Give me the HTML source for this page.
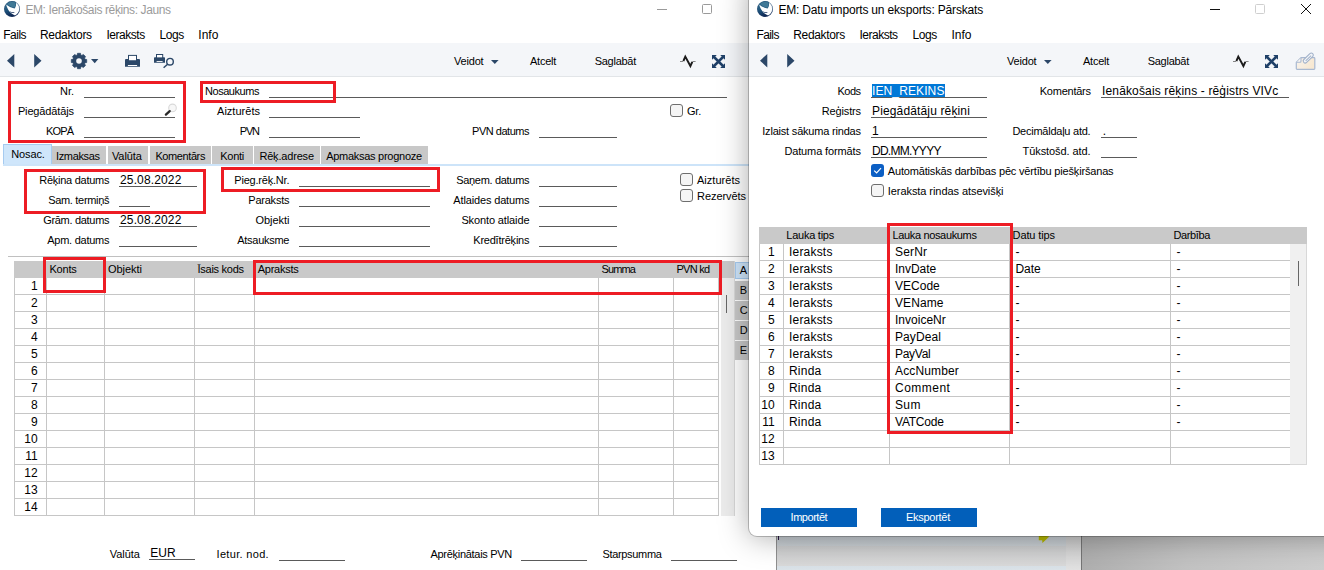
<!DOCTYPE html>
<html lang="lv"><head><meta charset="utf-8"><title>EM: Ienākošais rēķins</title>
<style>
html,body{margin:0;padding:0;background:#fff}
#root{position:relative;width:1324px;height:570px;overflow:hidden;background:#fff;font-family:"Liberation Sans",sans-serif}
#root div{position:absolute}
.t{position:absolute;white-space:nowrap;line-height:20px;height:20px;z-index:3}
svg{position:absolute;overflow:visible;z-index:3}
</style></head><body>
<div id="root">
<div style="left:776px;top:530px;width:1px;height:40px;background:#8f8f8f;"></div>
<div style="left:777px;top:530px;width:289px;height:40px;background:linear-gradient(#c3c9ce 0,#c3c9ce 6px,#c9cfd3 16px,#cbcccd 16px,#d9d9d9 36px,#d8e0e6 36px,#dbe3e8 40px);"></div>
<div style="left:1066px;top:530px;width:15px;height:40px;background:linear-gradient(#c6c6c6 0,#c9c9c9 6px,#e2e2e2 40px);"></div>
<div style="left:1081px;top:530px;width:1px;height:40px;background:#757575;"></div>
<div style="left:1082px;top:530px;width:242px;height:40px;background:linear-gradient(105deg,#adadad 0,#c2c2c2 45%,#cecece 100%);"></div>
<div style="left:778px;top:536px;width:1px;height:4px;background:#2a1440;"></div>
<svg style="left:1038px;top:535px" width="13" height="9" viewBox="0 0 13 9"><path d="M0.8 0 L11.4 1.6 L4.4 8 L4.2 5.2 L0.8 5.2 Z" fill="#b4b700"/></svg>
<svg style="left:4px;top:0.8px" width="16" height="16" viewBox="0 0 16 16"><defs><linearGradient id="lg" x1="0.2" y1="0" x2="0.6" y2="1"><stop offset="0" stop-color="#3b7694"/><stop offset="0.55" stop-color="#1c4f78"/><stop offset="1" stop-color="#0a1c4a"/></linearGradient></defs><circle cx="8" cy="8" r="7.9" fill="url(#lg)"/><path d="M2.2 3.6 C3.2 8.2 6 12.4 11 14.6 C13.8 13.2 15.6 10.4 15.5 7.2 C15.3 4.6 13.9 2.3 11.9 1.2 C12.4 3.8 11.8 6 10.6 7.4 C7.4 6.9 4.3 5.6 2.2 3.6 Z" fill="#fdfeff"/><path d="M3.2 2.8 C5.4 0.5 8.8 0 11.3 1 C11.8 3.2 11.3 5.4 10.5 6.8 C7.7 6.3 5 4.9 3.2 2.8 Z" fill="#3f7896"/><path d="M5.8 10.2 C7.3 11.1 9.2 11.3 10.8 10.9 C9.6 12.2 7 12.2 5.8 10.2 Z" fill="#15305e"/><circle cx="8" cy="8" r="7.6" fill="none" stroke="#1d3d68" stroke-width="0.5" opacity="0.7"/></svg>
<div style="left:657px;top:9px;width:10px;height:1px;background:#9a9a9a;"></div>
<div style="left:702px;top:4px;width:8px;height:8px;border:1px solid #9a9a9a;border-radius:1.5px;"></div>
<div style="left:0px;top:43px;width:749px;height:33px;background:#f4f6f9;"></div>
<div style="left:0px;top:76px;width:749px;height:1px;background:#e2e5e8;"></div>
<svg style="left:6.8px;top:53.7px" width="36" height="14"><path d="M7.3 0 L7.3 13.4 L0 6.7 Z M27.2 0 L27.2 13.4 L34.5 6.7 Z" fill="#2b4768"/></svg>
<svg style="left:71px;top:52.9px" width="16" height="16" viewBox="0 0 16 16"><g transform="translate(8,8)" fill="#2b4768"><path d="M-1.5 -7.7 H1.5 L2.2 -5 H-2.2 Z M-1.5 7.7 H1.5 L2.2 5 H-2.2 Z" stroke="#2b4768" stroke-width="0.7" stroke-linejoin="round" transform="rotate(0)"/><path d="M-1.5 -7.7 H1.5 L2.2 -5 H-2.2 Z M-1.5 7.7 H1.5 L2.2 5 H-2.2 Z" stroke="#2b4768" stroke-width="0.7" stroke-linejoin="round" transform="rotate(45)"/><path d="M-1.5 -7.7 H1.5 L2.2 -5 H-2.2 Z M-1.5 7.7 H1.5 L2.2 5 H-2.2 Z" stroke="#2b4768" stroke-width="0.7" stroke-linejoin="round" transform="rotate(90)"/><path d="M-1.5 -7.7 H1.5 L2.2 -5 H-2.2 Z M-1.5 7.7 H1.5 L2.2 5 H-2.2 Z" stroke="#2b4768" stroke-width="0.7" stroke-linejoin="round" transform="rotate(135)"/><circle r="5.7"/><circle r="2.8" fill="#f4f6f9"/></g></svg>
<svg style="left:91px;top:59.2px" width="8" height="5"><path d="M0 0 L7.4 0 L3.7 4.2 Z" fill="#2b4768"/></svg>
<svg style="left:125px;top:54px" width="15" height="14" viewBox="0 0 15 14"><path d="M0 6 Q0 5 1 5 H14 Q15 5 15 6 V12.8 H0 Z" fill="#2b4768"/><rect x="3.5" y="1.4" width="8" height="5.4" fill="#fdfdfe" stroke="#2b4768" stroke-width="1"/><rect x="2.9" y="11" width="9.2" height="1" fill="#fdfdfe"/></svg>
<svg style="left:154px;top:53px" width="21" height="16" viewBox="0 0 21 16"><path d="M0 5 Q0 4.2 0.8 4.2 H10.2 Q11 4.2 11 5 V9.8 H0 Z" fill="#2b4768"/><rect x="2.5" y="1.5" width="6.2" height="3.4" fill="#fdfdfe" stroke="#2b4768" stroke-width="1"/><rect x="2.6" y="8" width="6" height="0.9" fill="#fdfdfe"/><circle cx="16" cy="8.7" r="3.3" fill="none" stroke="#2b4768" stroke-width="1.4"/><path d="M13.6 11.2 L9.6 14.8" stroke="#2b4768" stroke-width="1.5"/></svg>
<svg style="left:491px;top:59.5px" width="8" height="4"><path d="M0 0 L7.6 0 L3.8 4 Z" fill="#2b4768"/></svg>
<svg style="left:680.2px;top:54px" width="16" height="14" viewBox="0 0 16 14"><path d="M0 7.5 H2.9 L5.3 2.6 L10.4 12 L12.7 7.5 H15.6" fill="none" stroke="#555" stroke-width="0.7" stroke-linejoin="miter"/><path d="M3.4 7 L5.3 2.6 L10.4 12 L12.3 7.8" fill="none" stroke="#1c1c1c" stroke-width="1.9" stroke-linejoin="miter"/></svg>
<svg style="left:711.8px;top:54.9px" width="13" height="13" viewBox="0 0 13 13"><path d="M2 2 L11 11 M11 2 L2 11" stroke="#1f4068" stroke-width="2.5"/><path d="M0 0 H4.8 L0 4.8 Z M13 0 H8.2 L13 4.8 Z M0 13 H4.8 L0 8.2 Z M13 13 H8.2 L13 8.2 Z" fill="#1f4068"/></svg>
<div style="left:84px;top:97px;width:91px;height:1px;background:#5a5a5a;"></div>
<div style="left:84px;top:117px;width:91px;height:1px;background:#5a5a5a;"></div>
<div style="left:84px;top:137px;width:91px;height:1px;background:#5a5a5a;"></div>
<div style="left:269px;top:97px;width:458px;height:1px;background:#5a5a5a;"></div>
<div style="left:269px;top:117px;width:91px;height:1px;background:#5a5a5a;"></div>
<div style="left:269px;top:137px;width:91px;height:1px;background:#5a5a5a;"></div>
<div style="left:539px;top:137px;width:78px;height:1px;background:#5a5a5a;"></div>
<svg style="left:164px;top:103px" width="13" height="13" viewBox="0 0 13 13"><circle cx="8.5" cy="4.9" r="3.8" fill="#f7f7f7" stroke="#d9d9d9" stroke-width="1.1"/><path d="M5.7 8.1 L1.9 11.6" stroke="#2a2a2a" stroke-width="2.3" stroke-linecap="round"/></svg>
<div style="left:670px;top:104px;width:11px;height:11px;background:#f5f5f5;border:1px solid #6e6e6e;border-radius:3px"></div>
<div style="left:3px;top:164px;width:746px;height:2px;background:#cde4f9;"></div>
<div style="left:3px;top:144px;width:47px;height:19px;background:#cfe6fb;border:1px solid #a6cbf0;border-bottom:none;"></div>
<div style="left:52px;top:146px;width:54px;height:18px;background:#c8c8c8;"></div>
<div style="left:107.6px;top:146px;width:40.20000000000002px;height:18px;background:#c8c8c8;"></div>
<div style="left:149.5px;top:146px;width:61.400000000000006px;height:18px;background:#c8c8c8;"></div>
<div style="left:212.3px;top:146px;width:40.5px;height:18px;background:#c8c8c8;"></div>
<div style="left:254.2px;top:146px;width:65.80000000000001px;height:18px;background:#c8c8c8;"></div>
<div style="left:321.3px;top:146px;width:106.30000000000001px;height:18px;background:#c8c8c8;"></div>
<div style="left:119px;top:186px;width:78px;height:1px;background:#5a5a5a;"></div>
<div style="left:119px;top:206px;width:31px;height:1px;background:#5a5a5a;"></div>
<div style="left:119px;top:226px;width:78px;height:1px;background:#5a5a5a;"></div>
<div style="left:119px;top:246px;width:78px;height:1px;background:#5a5a5a;"></div>
<div style="left:299px;top:186px;width:131px;height:1px;background:#5a5a5a;"></div>
<div style="left:299px;top:206px;width:131px;height:1px;background:#5a5a5a;"></div>
<div style="left:299px;top:226px;width:131px;height:1px;background:#5a5a5a;"></div>
<div style="left:299px;top:246px;width:131px;height:1px;background:#5a5a5a;"></div>
<div style="left:539px;top:186px;width:78px;height:1px;background:#5a5a5a;"></div>
<div style="left:539px;top:206px;width:78px;height:1px;background:#5a5a5a;"></div>
<div style="left:539px;top:226px;width:78px;height:1px;background:#5a5a5a;"></div>
<div style="left:539px;top:246px;width:78px;height:1px;background:#5a5a5a;"></div>
<div style="left:680px;top:173px;width:11px;height:11px;background:#f5f5f5;border:1px solid #6e6e6e;border-radius:3px"></div>
<div style="left:680px;top:189px;width:11px;height:11px;background:#f5f5f5;border:1px solid #6e6e6e;border-radius:3px"></div>
<div style="left:8px;top:256px;width:741px;height:1px;background:#c0c0c0;"></div>
<div style="left:14px;top:261px;width:721px;height:17px;background:#c9c9c9;"></div>
<div style="left:721px;top:278px;width:14px;height:238px;background:#ececec;"></div>
<div style="left:726px;top:295px;width:1px;height:18px;background:#666;"></div>
<div style="left:14px;top:294px;width:705px;height:1px;background:#c6c6c6;"></div>
<div style="left:14px;top:311px;width:705px;height:1px;background:#c6c6c6;"></div>
<div style="left:14px;top:328px;width:705px;height:1px;background:#c6c6c6;"></div>
<div style="left:14px;top:345px;width:705px;height:1px;background:#c6c6c6;"></div>
<div style="left:14px;top:362px;width:705px;height:1px;background:#c6c6c6;"></div>
<div style="left:14px;top:379px;width:705px;height:1px;background:#c6c6c6;"></div>
<div style="left:14px;top:396px;width:705px;height:1px;background:#c6c6c6;"></div>
<div style="left:14px;top:413px;width:705px;height:1px;background:#c6c6c6;"></div>
<div style="left:14px;top:430px;width:705px;height:1px;background:#c6c6c6;"></div>
<div style="left:14px;top:447px;width:705px;height:1px;background:#c6c6c6;"></div>
<div style="left:14px;top:464px;width:705px;height:1px;background:#c6c6c6;"></div>
<div style="left:14px;top:481px;width:705px;height:1px;background:#c6c6c6;"></div>
<div style="left:14px;top:498px;width:705px;height:1px;background:#c6c6c6;"></div>
<div style="left:14px;top:515px;width:705px;height:1px;background:#c6c6c6;"></div>
<div style="left:14px;top:278px;width:1px;height:238px;background:#c6c6c6;"></div>
<div style="left:46px;top:278px;width:1px;height:238px;background:#c6c6c6;"></div>
<div style="left:104px;top:278px;width:1px;height:238px;background:#c6c6c6;"></div>
<div style="left:194px;top:278px;width:1px;height:238px;background:#c6c6c6;"></div>
<div style="left:254px;top:278px;width:1px;height:238px;background:#c6c6c6;"></div>
<div style="left:598px;top:278px;width:1px;height:238px;background:#c6c6c6;"></div>
<div style="left:673px;top:278px;width:1px;height:238px;background:#c6c6c6;"></div>
<div style="left:718px;top:278px;width:1px;height:238px;background:#c6c6c6;"></div>
<div style="left:734px;top:261px;width:1px;height:255px;background:#d8d8d8;"></div>
<div style="left:735px;top:262px;width:16px;height:15px;background:#cfe6fb;border:1px solid #a6cbf0;"></div>
<div style="left:735px;top:281px;width:18px;height:19px;background:#c8c8c8;"></div>
<div style="left:735px;top:301px;width:18px;height:19px;background:#c8c8c8;"></div>
<div style="left:735px;top:321px;width:18px;height:19px;background:#c8c8c8;"></div>
<div style="left:735px;top:341px;width:18px;height:19px;background:#c8c8c8;"></div>
<div style="left:149px;top:559px;width:46px;height:1px;background:#5a5a5a;"></div>
<div style="left:279px;top:560px;width:66px;height:1px;background:#5a5a5a;"></div>
<div style="left:521px;top:560px;width:66px;height:1px;background:#5a5a5a;"></div>
<div style="left:671px;top:560px;width:66px;height:1px;background:#5a5a5a;"></div>
<div style="left:8px;top:81px;width:172px;height:56px;border:3px solid #ed1c24;z-index:5"></div>
<div style="left:200px;top:80.5px;width:130px;height:16.0px;border:3px solid #ed1c24;z-index:5"></div>
<div style="left:24px;top:169px;width:176px;height:39px;border:3px solid #ed1c24;z-index:5"></div>
<div style="left:221px;top:167px;width:213px;height:19px;border:3px solid #ed1c24;z-index:5"></div>
<div style="left:43px;top:257px;width:57px;height:30px;border:3px solid #ed1c24;z-index:5"></div>
<div style="left:253px;top:260px;width:463px;height:29px;border:3px solid #ed1c24;z-index:5"></div>
<div style="left:749px;top:-20px;width:620px;height:556px;background:#fff;border-radius:0 0 0 8px;box-shadow:0 0 0 1px rgba(0,0,0,0.22),0 1px 30px rgba(0,0,0,0.34);z-index:6"></div>
<div id="rw" style="left:0;top:0;width:1324px;height:570px;z-index:7">
<svg style="left:757px;top:0.8px" width="16" height="16" viewBox="0 0 16 16"><defs><linearGradient id="lg" x1="0.2" y1="0" x2="0.6" y2="1"><stop offset="0" stop-color="#3b7694"/><stop offset="0.55" stop-color="#1c4f78"/><stop offset="1" stop-color="#0a1c4a"/></linearGradient></defs><circle cx="8" cy="8" r="7.9" fill="url(#lg)"/><path d="M2.2 3.6 C3.2 8.2 6 12.4 11 14.6 C13.8 13.2 15.6 10.4 15.5 7.2 C15.3 4.6 13.9 2.3 11.9 1.2 C12.4 3.8 11.8 6 10.6 7.4 C7.4 6.9 4.3 5.6 2.2 3.6 Z" fill="#fdfeff"/><path d="M3.2 2.8 C5.4 0.5 8.8 0 11.3 1 C11.8 3.2 11.3 5.4 10.5 6.8 C7.7 6.3 5 4.9 3.2 2.8 Z" fill="#3f7896"/><path d="M5.8 10.2 C7.3 11.1 9.2 11.3 10.8 10.9 C9.6 12.2 7 12.2 5.8 10.2 Z" fill="#15305e"/><circle cx="8" cy="8" r="7.6" fill="none" stroke="#1d3d68" stroke-width="0.5" opacity="0.7"/></svg>
<div style="left:749px;top:43px;width:600px;height:33px;background:#f4f6f9;"></div>
<div style="left:749px;top:76px;width:600px;height:1px;background:#e2e5e8;"></div>
<svg style="left:760.2px;top:53.7px" width="36" height="14"><path d="M7.3 0 L7.3 13.4 L0 6.7 Z M27.2 0 L27.2 13.4 L34.5 6.7 Z" fill="#2b4768"/></svg>
<div style="left:1210px;top:9px;width:10px;height:1px;background:#111;"></div>
<div style="left:1255px;top:4px;width:8px;height:8px;border:1px solid #cfcfcf;border-radius:1.5px;"></div>
<svg style="left:1301px;top:4px" width="10" height="10"><path d="M0 0 L10 10 M10 0 L0 10" stroke="#111" stroke-width="1"/></svg>
<svg style="left:1295px;top:52px" width="21" height="18" viewBox="0 0 21 18"><defs><linearGradient id="pg" x1="0" y1="0" x2="1" y2="0.3"><stop offset="0" stop-color="#f8f3ec"/><stop offset="1" stop-color="#f7e8d2"/></linearGradient></defs><path d="M1.3 10.3 L6 5.6 H19 Q19.8 5.6 19.8 6.4 V16.6 Q19.8 17.4 19 17.4 H2.1 Q1.3 17.4 1.3 16.6 Z" fill="url(#pg)" stroke="#a9b9d1" stroke-width="1.2" stroke-linejoin="round"/><path d="M1.6 10.2 H5 Q6 10.2 6 9.2 V5.9" fill="#fbf8f4" stroke="#a9b9d1" stroke-width="1.1"/><g transform="translate(13.4,5.9) rotate(-44)"><rect x="-6.4" y="-2" width="12.4" height="4" rx="2" fill="#f4f6f9" stroke="#a2b2ca" stroke-width="1.1"/><path d="M-4 0.2 H3.6" stroke="#a2b2ca" stroke-width="1"/></g></svg>
<div style="left:759px;top:227px;width:548px;height:17px;background:#c9c9c9;"></div>
<div style="left:1290px;top:244px;width:17px;height:221px;background:#f0f0f0;"></div>
<div style="left:1298px;top:261px;width:1px;height:25px;background:#666;"></div>
<div style="left:759px;top:260px;width:531px;height:1px;background:#c6c6c6;"></div>
<div style="left:759px;top:277px;width:531px;height:1px;background:#c6c6c6;"></div>
<div style="left:759px;top:294px;width:531px;height:1px;background:#c6c6c6;"></div>
<div style="left:759px;top:311px;width:531px;height:1px;background:#c6c6c6;"></div>
<div style="left:759px;top:328px;width:531px;height:1px;background:#c6c6c6;"></div>
<div style="left:759px;top:345px;width:531px;height:1px;background:#c6c6c6;"></div>
<div style="left:759px;top:362px;width:531px;height:1px;background:#c6c6c6;"></div>
<div style="left:759px;top:379px;width:531px;height:1px;background:#c6c6c6;"></div>
<div style="left:759px;top:396px;width:531px;height:1px;background:#c6c6c6;"></div>
<div style="left:759px;top:413px;width:531px;height:1px;background:#c6c6c6;"></div>
<div style="left:759px;top:430px;width:531px;height:1px;background:#c6c6c6;"></div>
<div style="left:759px;top:447px;width:531px;height:1px;background:#c6c6c6;"></div>
<div style="left:759px;top:464px;width:531px;height:1px;background:#c6c6c6;"></div>
<div style="left:759px;top:244px;width:1px;height:221px;background:#c6c6c6;"></div>
<div style="left:783px;top:244px;width:1px;height:221px;background:#c6c6c6;"></div>
<div style="left:889px;top:244px;width:1px;height:221px;background:#c6c6c6;"></div>
<div style="left:1009px;top:244px;width:1px;height:221px;background:#c6c6c6;"></div>
<div style="left:1170px;top:244px;width:1px;height:221px;background:#c6c6c6;"></div>
<div style="left:1306px;top:244px;width:1px;height:221px;background:#d8d8d8;"></div>
<div style="left:1290px;top:464px;width:17px;height:1px;background:#d8d8d8;"></div>
<div style="left:761px;top:508px;width:96px;height:19px;background:#025fba;"></div>
<div style="left:881px;top:508px;width:96px;height:19px;background:#025fba;"></div>
<div style="left:871px;top:97px;width:116px;height:1px;background:#5a5a5a;"></div>
<div style="left:871px;top:117px;width:116px;height:1px;background:#5a5a5a;"></div>
<div style="left:871px;top:137px;width:116px;height:1px;background:#5a5a5a;"></div>
<div style="left:871px;top:157px;width:116px;height:1px;background:#5a5a5a;"></div>
<div style="left:1101px;top:97px;width:188px;height:1px;background:#5a5a5a;"></div>
<div style="left:1101px;top:137px;width:36px;height:1px;background:#5a5a5a;"></div>
<div style="left:1101px;top:157px;width:36px;height:1px;background:#5a5a5a;"></div>
<div style="left:871.5px;top:84px;width:73.5px;height:13px;background:#0078d7;"></div>
<div style="left:871px;top:164px;width:13px;height:13px;background:#0c5fc4;border-radius:3px"></div><svg style="left:871px;top:164px;z-index:4" width="13" height="13" viewBox="0 0 13 13"><path d="M3.2 6.6 L5.6 9 L10 4.2" fill="none" stroke="#fff" stroke-width="1.2"/></svg>
<div style="left:871px;top:184px;width:11px;height:11px;background:#f5f5f5;border:1px solid #6e6e6e;border-radius:3px"></div>
<div style="left:887px;top:223px;width:120px;height:205px;border:3px solid #ed1c24;z-index:5"></div>
</div>
<div style="left:0;top:0;width:0;height:0;z-index:8">
<svg style="left:1044px;top:59.5px" width="8" height="4"><path d="M0 0 L7.6 0 L3.8 4 Z" fill="#2b4768"/></svg>
<svg style="left:1233.2px;top:54px" width="16" height="14" viewBox="0 0 16 14"><path d="M0 7.5 H2.9 L5.3 2.6 L10.4 12 L12.7 7.5 H15.6" fill="none" stroke="#555" stroke-width="0.7" stroke-linejoin="miter"/><path d="M3.4 7 L5.3 2.6 L10.4 12 L12.3 7.8" fill="none" stroke="#1c1c1c" stroke-width="1.9" stroke-linejoin="miter"/></svg>
<svg style="left:1264.8px;top:54.9px" width="13" height="13" viewBox="0 0 13 13"><path d="M2 2 L11 11 M11 2 L2 11" stroke="#1f4068" stroke-width="2.5"/><path d="M0 0 H4.8 L0 4.8 Z M13 0 H8.2 L13 4.8 Z M0 13 H4.8 L0 8.2 Z M13 13 H8.2 L13 8.2 Z" fill="#1f4068"/></svg>
</div>
<span class="t" id="t0" style="top:0.0px;font-size:12px;left:25.4px;color:#9b9b9b;letter-spacing:-0.385px;">EM: Ienākošais rēķins: Jauns</span>
<span class="t" id="t1" style="top:25.0px;font-size:12px;left:3.3px;letter-spacing:-0.529px;">Fails</span>
<span class="t" id="t2" style="top:25.0px;font-size:12px;left:40px;letter-spacing:-0.323px;">Redaktors</span>
<span class="t" id="t3" style="top:25.0px;font-size:12px;left:106.5px;letter-spacing:-0.477px;">Ieraksts</span>
<span class="t" id="t4" style="top:25.0px;font-size:12px;left:159.4px;letter-spacing:-0.358px;">Logs</span>
<span class="t" id="t5" style="top:25.0px;font-size:12px;left:198.3px;">Info</span>
<span class="t" id="t6" style="top:51.0px;font-size:11px;left:454px;letter-spacing:-0.182px;">Veidot</span>
<span class="t" id="t7" style="top:51.0px;font-size:11px;left:530px;letter-spacing:-0.253px;">Atcelt</span>
<span class="t" id="t8" style="top:51.0px;font-size:11px;left:594.7px;letter-spacing:-0.267px;">Saglabāt</span>
<span class="t" id="t9" style="top:81.0px;font-size:11px;right:1250px;letter-spacing:-0.021px;margin-right:0.021px;">Nr.</span>
<span class="t" id="t10" style="top:101.0px;font-size:11px;right:1250px;letter-spacing:-0.136px;margin-right:0.136px;">Piegādātājs</span>
<span class="t" id="t11" style="top:121.0px;font-size:11px;right:1250px;letter-spacing:-0.895px;margin-right:0.895px;">KOPĀ</span>
<span class="t" id="t12" style="top:81.0px;font-size:11px;left:205px;letter-spacing:-0.453px;">Nosaukums</span>
<span class="t" id="t13" style="top:101.0px;font-size:11px;right:1064px;letter-spacing:0.023px;margin-right:-0.023px;">Aizturēts</span>
<span class="t" id="t14" style="top:121.0px;font-size:11px;right:1064px;letter-spacing:-1.208px;margin-right:1.208px;">PVN</span>
<span class="t" id="t15" style="top:121.0px;font-size:11px;right:794.5px;letter-spacing:-0.475px;margin-right:0.475px;">PVN datums</span>
<span class="t" id="t16" style="top:101.0px;font-size:11px;left:687px;letter-spacing:-0.224px;">Gr.</span>
<span class="t" id="t17" style="top:143.5px;font-size:11px;left:11.3px;letter-spacing:-0.125px;">Nosac.</span>
<span class="t" id="t18" style="top:145.5px;font-size:11px;left:56px;letter-spacing:-0.346px;">Izmaksas</span>
<span class="t" id="t19" style="top:145.5px;font-size:11px;left:111.9px;letter-spacing:-0.062px;">Valūta</span>
<span class="t" id="t20" style="top:145.5px;font-size:11px;left:155.4px;letter-spacing:-0.400px;">Komentārs</span>
<span class="t" id="t21" style="top:145.5px;font-size:11px;left:220.2px;letter-spacing:-0.236px;">Konti</span>
<span class="t" id="t22" style="top:145.5px;font-size:11px;left:259.4px;letter-spacing:-0.177px;">Rēķ.adrese</span>
<span class="t" id="t23" style="top:145.5px;font-size:11px;left:326.2px;letter-spacing:-0.275px;">Apmaksas prognoze</span>
<span class="t" id="t24" style="top:170.0px;font-size:11px;right:1214.5px;letter-spacing:-0.260px;margin-right:0.260px;">Rēķina datums</span>
<span class="t" id="t25" style="top:170.0px;font-size:12px;left:120px;letter-spacing:0.144px;">25.08.2022</span>
<span class="t" id="t26" style="top:190.0px;font-size:11px;right:1214.5px;letter-spacing:-0.316px;margin-right:0.316px;">Sam. termiņš</span>
<span class="t" id="t27" style="top:210.0px;font-size:11px;right:1214.5px;letter-spacing:-0.307px;margin-right:0.307px;">Grām. datums</span>
<span class="t" id="t28" style="top:210.0px;font-size:12px;left:120px;letter-spacing:0.144px;">25.08.2022</span>
<span class="t" id="t29" style="top:230.0px;font-size:11px;right:1214.5px;letter-spacing:-0.256px;margin-right:0.256px;">Apm. datums</span>
<span class="t" id="t30" style="top:170.0px;font-size:11px;right:1034.5px;letter-spacing:-0.206px;margin-right:0.206px;">Pieg.rēķ.Nr.</span>
<span class="t" id="t31" style="top:190.0px;font-size:11px;right:1034.5px;letter-spacing:-0.225px;margin-right:0.225px;">Paraksts</span>
<span class="t" id="t32" style="top:210.0px;font-size:11px;right:1034.5px;letter-spacing:-0.036px;margin-right:0.036px;">Objekti</span>
<span class="t" id="t33" style="top:230.0px;font-size:11px;right:1034.5px;letter-spacing:-0.269px;margin-right:0.269px;">Atsauksme</span>
<span class="t" id="t34" style="top:170.0px;font-size:11px;right:794.5px;letter-spacing:-0.311px;margin-right:0.311px;">Saņem. datums</span>
<span class="t" id="t35" style="top:190.0px;font-size:11px;right:794.5px;letter-spacing:-0.151px;margin-right:0.151px;">Atlaides datums</span>
<span class="t" id="t36" style="top:210.0px;font-size:11px;right:794.5px;letter-spacing:-0.123px;margin-right:0.123px;">Skonto atlaide</span>
<span class="t" id="t37" style="top:230.0px;font-size:11px;right:794.5px;letter-spacing:-0.225px;margin-right:0.225px;">Kredītrēķins</span>
<span class="t" id="t38" style="top:170.0px;font-size:11px;left:697px;letter-spacing:0.023px;">Aizturēts</span>
<span class="t" id="t39" style="top:186.0px;font-size:11px;left:697px;letter-spacing:-0.059px;">Rezervēts</span>
<span class="t" id="t40" style="top:276.0px;font-size:12px;right:1286.3px;">1</span>
<span class="t" id="t41" style="top:293.0px;font-size:12px;right:1286.3px;">2</span>
<span class="t" id="t42" style="top:310.0px;font-size:12px;right:1286.3px;">3</span>
<span class="t" id="t43" style="top:327.0px;font-size:12px;right:1286.3px;">4</span>
<span class="t" id="t44" style="top:344.0px;font-size:12px;right:1286.3px;">5</span>
<span class="t" id="t45" style="top:361.0px;font-size:12px;right:1286.3px;">6</span>
<span class="t" id="t46" style="top:378.0px;font-size:12px;right:1286.3px;">7</span>
<span class="t" id="t47" style="top:395.0px;font-size:12px;right:1286.3px;">8</span>
<span class="t" id="t48" style="top:412.0px;font-size:12px;right:1286.3px;">9</span>
<span class="t" id="t49" style="top:429.0px;font-size:12px;right:1286.3px;">10</span>
<span class="t" id="t50" style="top:446.0px;font-size:12px;right:1286.3px;">11</span>
<span class="t" id="t51" style="top:463.0px;font-size:12px;right:1286.3px;">12</span>
<span class="t" id="t52" style="top:480.0px;font-size:12px;right:1286.3px;">13</span>
<span class="t" id="t53" style="top:497.0px;font-size:12px;right:1286.3px;">14</span>
<span class="t" id="t54" style="top:259.0px;font-size:11px;left:49.5px;letter-spacing:-0.228px;">Konts</span>
<span class="t" id="t55" style="top:259.0px;font-size:11px;left:108px;letter-spacing:-0.036px;">Objekti</span>
<span class="t" id="t56" style="top:259.0px;font-size:11px;left:197.5px;letter-spacing:-0.262px;">Īsais kods</span>
<span class="t" id="t57" style="top:259.0px;font-size:11px;left:257.7px;letter-spacing:-0.250px;">Apraksts</span>
<span class="t" id="t58" style="top:259.0px;font-size:11px;left:601.5px;letter-spacing:-0.881px;">Summa</span>
<span class="t" id="t59" style="top:259.0px;font-size:11px;left:676.4px;letter-spacing:-0.716px;">PVN kd</span>
<span class="t" id="t60" style="top:260.0px;font-size:11px;left:739.8px;letter-spacing:-0.344px;">A</span>
<span class="t" id="t61" style="top:280.0px;font-size:11px;left:739.8px;letter-spacing:-1.344px;">B</span>
<span class="t" id="t62" style="top:300.0px;font-size:11px;left:739.8px;letter-spacing:-0.953px;">C</span>
<span class="t" id="t63" style="top:320.0px;font-size:11px;left:739.8px;letter-spacing:-0.953px;">D</span>
<span class="t" id="t64" style="top:340.0px;font-size:11px;left:739.8px;letter-spacing:-1.344px;">E</span>
<span class="t" id="t65" style="top:544.0px;font-size:11px;left:109.8px;letter-spacing:-0.062px;">Valūta</span>
<span class="t" id="t66" style="top:543.0px;font-size:12px;left:150.3px;">EUR</span>
<span class="t" id="t67" style="top:544.0px;font-size:11px;left:216.5px;letter-spacing:0.324px;">Ietur. nod.</span>
<span class="t" id="t68" style="top:544.0px;font-size:11px;left:430.5px;letter-spacing:-0.295px;">Aprēķinātais PVN</span>
<span class="t" id="t69" style="top:544.0px;font-size:11px;left:602.5px;letter-spacing:-0.336px;">Starpsumma</span>
<span class="t" id="t70" style="top:0.0px;font-size:12px;left:778.4px;letter-spacing:-0.179px;z-index:8;">EM: Datu imports un eksports: Pārskats</span>
<span class="t" id="t71" style="top:25.0px;font-size:12px;left:756.4px;letter-spacing:-0.569px;z-index:8;">Fails</span>
<span class="t" id="t72" style="top:25.0px;font-size:12px;left:793.2px;letter-spacing:-0.323px;z-index:8;">Redaktors</span>
<span class="t" id="t73" style="top:25.0px;font-size:12px;left:859.5px;letter-spacing:-0.502px;z-index:8;">Ieraksts</span>
<span class="t" id="t74" style="top:25.0px;font-size:12px;left:912.4px;letter-spacing:-0.408px;z-index:8;">Logs</span>
<span class="t" id="t75" style="top:25.0px;font-size:12px;left:951.4px;letter-spacing:0.046px;z-index:8;">Info</span>
<span class="t" id="t76" style="top:51.0px;font-size:11px;left:1007px;letter-spacing:-0.182px;z-index:8;">Veidot</span>
<span class="t" id="t77" style="top:51.0px;font-size:11px;left:1083px;letter-spacing:-0.253px;z-index:8;">Atcelt</span>
<span class="t" id="t78" style="top:51.0px;font-size:11px;left:1147.7px;letter-spacing:-0.267px;z-index:8;">Saglabāt</span>
<span class="t" id="t79" style="top:81.0px;font-size:11px;right:463px;letter-spacing:-0.520px;margin-right:0.520px;z-index:8;">Kods</span>
<span class="t" id="t80" style="top:81.0px;font-size:12px;left:872px;color:#fff;letter-spacing:0.114px;z-index:8;">IEN_REKINS</span>
<span class="t" id="t81" style="top:101.0px;font-size:11px;right:463px;letter-spacing:-0.168px;margin-right:0.168px;z-index:8;">Reģistrs</span>
<span class="t" id="t82" style="top:101.0px;font-size:12px;left:872px;letter-spacing:0.144px;z-index:8;">Piegādātāju rēķini</span>
<span class="t" id="t83" style="top:121.0px;font-size:11px;right:463px;letter-spacing:-0.196px;margin-right:0.196px;z-index:8;">Izlaist sākuma rindas</span>
<span class="t" id="t84" style="top:121.0px;font-size:12px;left:872px;z-index:8;">1</span>
<span class="t" id="t85" style="top:141.0px;font-size:11px;right:463px;letter-spacing:-0.125px;margin-right:0.125px;z-index:8;">Datuma formāts</span>
<span class="t" id="t86" style="top:141.0px;font-size:12px;left:872px;letter-spacing:-0.732px;z-index:8;">DD.MM.YYYY</span>
<span class="t" id="t87" style="top:81.0px;font-size:11px;right:233px;letter-spacing:-0.245px;margin-right:0.245px;z-index:8;">Komentārs</span>
<span class="t" id="t88" style="top:81.0px;font-size:12px;left:1102px;letter-spacing:0.151px;z-index:8;">Ienākošais rēķins - rēģistrs VIVc</span>
<span class="t" id="t89" style="top:121.0px;font-size:11px;right:233.4000000000001px;letter-spacing:-0.246px;margin-right:0.246px;z-index:8;">Decimāldaļu atd.</span>
<span class="t" id="t90" style="top:121.0px;font-size:12px;left:1102.7px;z-index:8;">.</span>
<span class="t" id="t91" style="top:141.0px;font-size:11px;right:233.4000000000001px;letter-spacing:-0.078px;margin-right:0.078px;z-index:8;">Tūkstošd. atd.</span>
<span class="t" id="t92" style="top:161.0px;font-size:11px;left:887.8px;letter-spacing:-0.173px;z-index:8;">Automātiskās darbības pēc vērtību piešķiršanas</span>
<span class="t" id="t93" style="top:181.0px;font-size:11px;left:887.8px;letter-spacing:-0.068px;z-index:8;">Ieraksta rindas atsevišķi</span>
<span class="t" id="t94" style="top:225.0px;font-size:11px;left:786.3px;letter-spacing:-0.246px;z-index:8;">Lauka tips</span>
<span class="t" id="t95" style="top:225.0px;font-size:11px;left:892.4px;letter-spacing:-0.339px;z-index:8;">Lauka nosaukums</span>
<span class="t" id="t96" style="top:225.0px;font-size:11px;left:1012.6px;letter-spacing:-0.136px;z-index:8;">Datu tips</span>
<span class="t" id="t97" style="top:225.0px;font-size:11px;left:1173.4px;letter-spacing:-0.363px;z-index:8;">Darbība</span>
<span class="t" id="t98" style="top:242.0px;font-size:12px;right:549.3px;z-index:8;">1</span>
<span class="t" id="t99" style="top:242.0px;font-size:12px;left:789px;letter-spacing:0.198px;z-index:8;">Ieraksts</span>
<span class="t" id="t100" style="top:242.0px;font-size:12px;left:895px;letter-spacing:0.171px;z-index:8;">SerNr</span>
<span class="t" id="t101" style="top:242.0px;font-size:12px;left:1015.4px;z-index:8;">-</span>
<span class="t" id="t102" style="top:242.0px;font-size:12px;left:1176.4px;z-index:8;">-</span>
<span class="t" id="t103" style="top:259.0px;font-size:12px;right:549.3px;z-index:8;">2</span>
<span class="t" id="t104" style="top:259.0px;font-size:12px;left:789px;letter-spacing:0.198px;z-index:8;">Ieraksts</span>
<span class="t" id="t105" style="top:259.0px;font-size:12px;left:895px;letter-spacing:-0.023px;z-index:8;">InvDate</span>
<span class="t" id="t106" style="top:259.0px;font-size:12px;left:1015.4px;z-index:8;">Date</span>
<span class="t" id="t107" style="top:259.0px;font-size:12px;left:1176.4px;z-index:8;">-</span>
<span class="t" id="t108" style="top:276.0px;font-size:12px;right:549.3px;z-index:8;">3</span>
<span class="t" id="t109" style="top:276.0px;font-size:12px;left:789px;letter-spacing:0.198px;z-index:8;">Ieraksts</span>
<span class="t" id="t110" style="top:276.0px;font-size:12px;left:895px;letter-spacing:0.016px;z-index:8;">VECode</span>
<span class="t" id="t111" style="top:276.0px;font-size:12px;left:1015.4px;z-index:8;">-</span>
<span class="t" id="t112" style="top:276.0px;font-size:12px;left:1176.4px;z-index:8;">-</span>
<span class="t" id="t113" style="top:293.0px;font-size:12px;right:549.3px;z-index:8;">4</span>
<span class="t" id="t114" style="top:293.0px;font-size:12px;left:789px;letter-spacing:0.198px;z-index:8;">Ieraksts</span>
<span class="t" id="t115" style="top:293.0px;font-size:12px;left:895px;letter-spacing:0.095px;z-index:8;">VEName</span>
<span class="t" id="t116" style="top:293.0px;font-size:12px;left:1015.4px;z-index:8;">-</span>
<span class="t" id="t117" style="top:293.0px;font-size:12px;left:1176.4px;z-index:8;">-</span>
<span class="t" id="t118" style="top:310.0px;font-size:12px;right:549.3px;z-index:8;">5</span>
<span class="t" id="t119" style="top:310.0px;font-size:12px;left:789px;letter-spacing:0.198px;z-index:8;">Ieraksts</span>
<span class="t" id="t120" style="top:310.0px;font-size:12px;left:895px;letter-spacing:0.012px;z-index:8;">InvoiceNr</span>
<span class="t" id="t121" style="top:310.0px;font-size:12px;left:1015.4px;z-index:8;">-</span>
<span class="t" id="t122" style="top:310.0px;font-size:12px;left:1176.4px;z-index:8;">-</span>
<span class="t" id="t123" style="top:327.0px;font-size:12px;right:549.3px;z-index:8;">6</span>
<span class="t" id="t124" style="top:327.0px;font-size:12px;left:789px;letter-spacing:0.198px;z-index:8;">Ieraksts</span>
<span class="t" id="t125" style="top:327.0px;font-size:12px;left:895px;letter-spacing:0.092px;z-index:8;">PayDeal</span>
<span class="t" id="t126" style="top:327.0px;font-size:12px;left:1015.4px;z-index:8;">-</span>
<span class="t" id="t127" style="top:327.0px;font-size:12px;left:1176.4px;z-index:8;">-</span>
<span class="t" id="t128" style="top:344.0px;font-size:12px;right:549.3px;z-index:8;">7</span>
<span class="t" id="t129" style="top:344.0px;font-size:12px;left:789px;letter-spacing:0.198px;z-index:8;">Ieraksts</span>
<span class="t" id="t130" style="top:344.0px;font-size:12px;left:895px;letter-spacing:-0.290px;z-index:8;">PayVal</span>
<span class="t" id="t131" style="top:344.0px;font-size:12px;left:1015.4px;z-index:8;">-</span>
<span class="t" id="t132" style="top:344.0px;font-size:12px;left:1176.4px;z-index:8;">-</span>
<span class="t" id="t133" style="top:361.0px;font-size:12px;right:549.3px;z-index:8;">8</span>
<span class="t" id="t134" style="top:361.0px;font-size:12px;left:789px;letter-spacing:0.208px;z-index:8;">Rinda</span>
<span class="t" id="t135" style="top:361.0px;font-size:12px;left:895px;letter-spacing:0.146px;z-index:8;">AccNumber</span>
<span class="t" id="t136" style="top:361.0px;font-size:12px;left:1015.4px;z-index:8;">-</span>
<span class="t" id="t137" style="top:361.0px;font-size:12px;left:1176.4px;z-index:8;">-</span>
<span class="t" id="t138" style="top:378.0px;font-size:12px;right:549.3px;z-index:8;">9</span>
<span class="t" id="t139" style="top:378.0px;font-size:12px;left:789px;letter-spacing:0.208px;z-index:8;">Rinda</span>
<span class="t" id="t140" style="top:378.0px;font-size:12px;left:895px;letter-spacing:0.483px;z-index:8;">Comment</span>
<span class="t" id="t141" style="top:378.0px;font-size:12px;left:1015.4px;z-index:8;">-</span>
<span class="t" id="t142" style="top:378.0px;font-size:12px;left:1176.4px;z-index:8;">-</span>
<span class="t" id="t143" style="top:395.0px;font-size:12px;right:549.3px;z-index:8;">10</span>
<span class="t" id="t144" style="top:395.0px;font-size:12px;left:789px;letter-spacing:0.208px;z-index:8;">Rinda</span>
<span class="t" id="t145" style="top:395.0px;font-size:12px;left:895px;letter-spacing:0.371px;z-index:8;">Sum</span>
<span class="t" id="t146" style="top:395.0px;font-size:12px;left:1015.4px;z-index:8;">-</span>
<span class="t" id="t147" style="top:395.0px;font-size:12px;left:1176.4px;z-index:8;">-</span>
<span class="t" id="t148" style="top:412.0px;font-size:12px;right:549.3px;z-index:8;">11</span>
<span class="t" id="t149" style="top:412.0px;font-size:12px;left:789px;letter-spacing:0.208px;z-index:8;">Rinda</span>
<span class="t" id="t150" style="top:412.0px;font-size:12px;left:895px;letter-spacing:-0.236px;z-index:8;">VATCode</span>
<span class="t" id="t151" style="top:412.0px;font-size:12px;left:1015.4px;z-index:8;">-</span>
<span class="t" id="t152" style="top:412.0px;font-size:12px;left:1176.4px;z-index:8;">-</span>
<span class="t" id="t153" style="top:429.0px;font-size:12px;right:549.3px;z-index:8;">12</span>
<span class="t" id="t154" style="top:446.0px;font-size:12px;right:549.3px;z-index:8;">13</span>
<span class="t" id="t155" style="top:507.0px;font-size:11px;left:790.6px;color:#fff;letter-spacing:-0.470px;z-index:8;">Importēt</span>
<span class="t" id="t156" style="top:507.0px;font-size:11px;left:906px;color:#fff;letter-spacing:-0.274px;z-index:8;">Eksportēt</span>
</div>
</body></html>
